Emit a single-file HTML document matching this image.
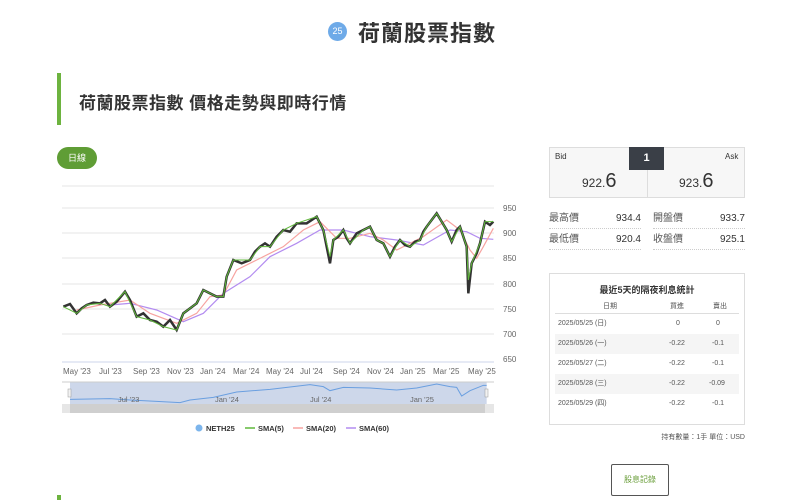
<!DOCTYPE html>
<html><head><meta charset="utf-8"><style>
*{margin:0;padding:0;box-sizing:border-box}
body{width:800px;height:500px;overflow:hidden;background:#fff;font-family:"Liberation Sans","Noto Sans CJK TC",sans-serif;color:#333;position:relative}
.a{position:absolute}
.st{display:flex;justify-content:space-between;align-items:center;width:92px;font-size:10px;border-bottom:1px dotted #ccc;height:20px;line-height:14px;color:#555}
.st b{font-weight:normal;color:#333}
</style></head><body>
<div class="a" style="left:328px;top:22px;width:19px;height:19px;border-radius:50%;background:#6eaae8;color:#fff;font-size:9px;line-height:19px;text-align:center">25</div>
<div class="a" style="left:358px;top:16px;font-size:22px;font-weight:bold;color:#333;letter-spacing:1px">荷蘭股票指數</div>
<div class="a" style="left:57px;top:73px;width:4px;height:52px;background:#6db33f"></div>
<div class="a" style="left:79px;top:89px;font-size:17px;font-weight:bold;color:#333;letter-spacing:0.5px">荷蘭股票指數 價格走勢與即時行情</div>
<div class="a" style="left:57px;top:147px;width:40px;height:22px;border-radius:11px;background:#5f9d35;color:#fff;font-size:9px;line-height:22px;text-align:center">日線</div>

<svg class="a" style="left:0;top:0" width="540" height="500">
<g stroke="#e6e6e6" stroke-width="1">
<line x1="62" y1="186" x2="494" y2="186"/>
<line x1="62" y1="208" x2="494" y2="208"/><line x1="62" y1="233" x2="494" y2="233"/>
<line x1="62" y1="258" x2="494" y2="258"/><line x1="62" y1="284" x2="494" y2="284"/>
<line x1="62" y1="309" x2="494" y2="309"/><line x1="62" y1="334" x2="494" y2="334"/>
</g>
<line x1="62" y1="362" x2="494" y2="362" stroke="#ccd6eb"/>
<g font-size="8" fill="#666" font-family="Liberation Sans,sans-serif">
<text x="503" y="211">950</text><text x="503" y="236">900</text><text x="503" y="261">850</text>
<text x="503" y="287">800</text><text x="503" y="312">750</text><text x="503" y="337">700</text><text x="503" y="362">650</text>
<text x="63" y="374">May '23</text><text x="99" y="374">Jul '23</text><text x="133" y="374">Sep '23</text>
<text x="167" y="374">Nov '23</text><text x="200" y="374">Jan '24</text><text x="233" y="374">Mar '24</text>
<text x="266" y="374">May '24</text><text x="300" y="374">Jul '24</text><text x="333" y="374">Sep '24</text>
<text x="367" y="374">Nov '24</text><text x="400" y="374">Jan '25</text><text x="433" y="374">Mar '25</text>
<text x="468" y="374">May '25</text>
</g>
<g transform="translate(50,180) scale(0.33333)" fill="none">
<polyline vector-effect="non-scaling-stroke" stroke="#b38cf0" stroke-width="1.2" points="180,375 240,370 320,390 400,425 460,400 520,340 600,290 660,230 740,190 810,150 880,150 960,170 1040,180 1120,195 1200,150 1250,155 1290,175 1330,178"/>
<polyline vector-effect="non-scaling-stroke" stroke="#f7a3a0" stroke-width="1.2" points="80,390 150,375 240,360 300,400 380,430 440,400 480,350 520,345 560,270 620,240 700,200 760,150 810,125 860,175 900,175 960,160 1000,180 1040,210 1080,190 1120,170 1190,120 1230,150 1260,210 1280,235 1300,200 1330,145"/>
<polyline vector-effect="non-scaling-stroke" stroke="#333" stroke-width="2.5" points="40,380 60,372 80,400 95,385 110,375 130,368 150,370 165,360 180,380 200,365 225,335 240,360 260,410 280,400 300,420 320,425 340,440 360,420 380,450 400,400 420,385 440,370 460,330 480,340 500,350 520,350 530,290 550,240 575,250 600,240 615,215 630,200 645,190 660,200 680,170 700,150 720,155 740,130 770,130 800,110 820,150 840,250 850,180 865,170 880,150 890,175 900,190 920,160 940,150 960,140 980,180 1000,190 1020,230 1035,200 1050,180 1065,195 1080,200 1095,185 1110,180 1120,155 1130,140 1145,120 1160,100 1175,125 1190,150 1205,185 1220,150 1230,140 1240,170 1250,200 1255,340 1265,250 1280,220 1290,190 1305,125 1320,135 1330,125"/>
<polyline vector-effect="non-scaling-stroke" stroke="#5fb83a" stroke-width="1" points="40,380 80,400 110,375 150,370 180,380 225,335 260,410 300,420 340,440 380,450 400,400 440,370 460,330 500,350 520,350 530,290 550,240 600,240 630,200 660,200 700,150 740,130 800,110 820,150 840,230 850,180 880,150 900,190 940,150 960,140 980,180 1000,190 1020,230 1050,180 1080,200 1110,180 1130,140 1160,100 1190,150 1205,185 1230,140 1250,200 1255,300 1265,250 1290,190 1305,125 1330,125"/>
<rect x="60" y="607" width="1250" height="68" fill="#cdd7ea"/>
<polyline vector-effect="non-scaling-stroke" stroke="#6a9fe0" stroke-width="1" points="60,658 180,656 240,660 320,664 390,668 420,660 490,652 560,636 660,628 780,614 820,620 840,632 880,622 960,624 1040,630 1100,624 1160,612 1200,620 1220,622 1235,648 1260,632 1300,616 1310,616"/>
</g>
<line x1="62" y1="382" x2="494" y2="382" stroke="#ccc"/>
<rect x="62" y="404" width="432" height="9" fill="#e6e6e6"/>
<rect x="70" y="404" width="415" height="9" fill="#cfcfcf"/>
<rect x="68" y="389" width="3" height="8" fill="#f2f2f2" stroke="#999" stroke-width=".5"/>
<rect x="485" y="389" width="3" height="8" fill="#f2f2f2" stroke="#999" stroke-width=".5"/>
<g font-size="7.5" fill="#666"><text x="118" y="402">Jul '23</text><text x="215" y="402">Jan '24</text><text x="310" y="402">Jul '24</text><text x="410" y="402">Jan '25</text></g>
<g font-size="7.5" font-weight="bold" fill="#333">
<circle cx="199" cy="428" r="3.5" fill="#7cb5ec"/><text x="206" y="431">NETH25</text>
<line x1="245" y1="428" x2="255" y2="428" stroke="#5fb83a" stroke-width="1.5"/><text x="258" y="431">SMA(5)</text>
<line x1="293" y1="428" x2="303" y2="428" stroke="#f7a3a0" stroke-width="1.5"/><text x="306" y="431">SMA(20)</text>
<line x1="346" y1="428" x2="356" y2="428" stroke="#b38cf0" stroke-width="1.5"/><text x="359" y="431">SMA(60)</text>
</g>
</svg>

<div class="a" style="left:549px;top:147px;width:196px;height:51px;border:1px solid #ddd;background:#f7f7f7"></div>
<div class="a" style="left:647px;top:147px;width:1px;height:51px;background:#ddd"></div>
<div class="a" style="left:629px;top:147px;width:35px;height:23px;background:#3a3f47;color:#fff;font-size:11px;font-weight:bold;text-align:center;line-height:23px">1</div>
<div class="a" style="left:555px;top:152px;font-size:8px">Bid</div>
<div class="a" style="left:725px;top:152px;font-size:8px">Ask</div>
<div class="a" style="left:582px;top:170px;font-size:12px">922.<span style="font-size:20px">6</span></div>
<div class="a" style="left:679px;top:170px;font-size:12px">923.<span style="font-size:20px">6</span></div>

<div class="a st" style="left:549px;top:209px">最高價<b>934.4</b></div>
<div class="a st" style="left:653px;top:209px">開盤價<b>933.7</b></div>
<div class="a st" style="left:549px;top:230px">最低價<b>920.4</b></div>
<div class="a st" style="left:653px;top:230px">收盤價<b>925.1</b></div>

<div class="a" style="left:549px;top:273px;width:196px;height:152px;border:1px solid #ddd"></div>
<div class="a" style="left:549px;top:283px;width:196px;text-align:center;font-size:9px;font-weight:bold">最近5天的隔夜利息統計</div>
<div class="a" style="left:555px;top:301px;width:184px;font-size:7px;color:#555">
<div style="height:13px;border-bottom:1px solid #ddd;position:relative"><span class="a" style="left:48px">日期</span><span class="a" style="left:115px">買進</span><span class="a" style="left:158px">賣出</span></div>
<div style="height:20px;line-height:20px;position:relative"><span class="a" style="left:3px">2025/05/25 (日)</span><span class="a" style="left:121px">0</span><span class="a" style="left:161px">0</span></div>
<div style="height:20px;line-height:20px;position:relative;background:#f5f5f5"><span class="a" style="left:3px">2025/05/26 (一)</span><span class="a" style="left:114px">-0.22</span><span class="a" style="left:157px">-0.1</span></div>
<div style="height:20px;line-height:20px;position:relative"><span class="a" style="left:3px">2025/05/27 (二)</span><span class="a" style="left:114px">-0.22</span><span class="a" style="left:157px">-0.1</span></div>
<div style="height:20px;line-height:20px;position:relative;background:#f5f5f5"><span class="a" style="left:3px">2025/05/28 (三)</span><span class="a" style="left:114px">-0.22</span><span class="a" style="left:154px">-0.09</span></div>
<div style="height:20px;line-height:20px;position:relative"><span class="a" style="left:3px">2025/05/29 (四)</span><span class="a" style="left:114px">-0.22</span><span class="a" style="left:157px">-0.1</span></div>
</div>
<div class="a" style="left:600px;top:432px;width:145px;text-align:right;font-size:7px;color:#555">持有數量：1手 單位：USD</div>
<div class="a" style="left:611px;top:464px;width:58px;height:32px;border:1px solid #555;border-radius:2px;font-size:8px;color:#6a9e3a;text-align:center;line-height:30px">股息記錄</div>
<div class="a" style="left:57px;top:495px;width:4px;height:5px;background:#6db33f"></div>
</body></html>
